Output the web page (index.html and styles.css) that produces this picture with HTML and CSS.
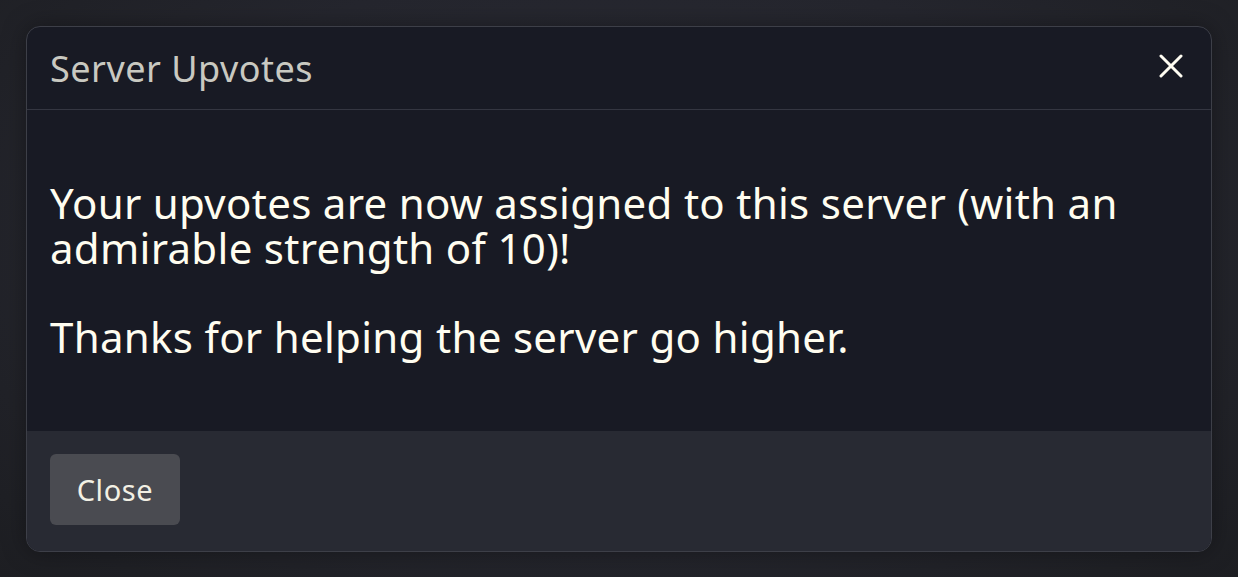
FILE: index.html
```html
<!DOCTYPE html>
<html lang="en">
<head>
	<meta charset="UTF-8">
	<title>Server Upvotes</title>
	<link rel="stylesheet" href="styles.css">
</head>
<body>
	<div class="modal">
		<div class="modal-header">
			<h5 class="modal-title">Server Upvotes</h5>
			<button class="btn-close" type="button" aria-label="Close">
				<svg width="24" height="24" viewBox="0 0 24 24"><path d="M2 2 L22 22 M22 2 L2 22" stroke="#fffdf2" stroke-width="3" stroke-linecap="round"/></svg>
			</button>
		</div>
		<div class="modal-body">
			<p>Your upvotes are now assigned to this server (with an admirable strength of 10)!<br><br>Thanks for helping the server go higher.</p>
		</div>
		<div class="modal-footer">
			<button class="btn" type="button">Close</button>
		</div>
	</div>
</body>
</html>
```

FILE: styles.css
```css
*{margin: 0;padding: 0;box-sizing: border-box;}
body{
	background: radial-gradient(ellipse at 50% 40%, #2b2c35 0%, #25262e 55%, #1d1e22 100%);
	height: 577px;
	padding: 26px;
	font-family: "Noto Sans", "Open Sans", sans-serif;
	overflow: hidden;
}
.modal{
	width: 1186px;
	border: 1px solid #3d3f48;
	border-radius: 14px;
	overflow: hidden;
	background: #181a24;
	box-shadow: 0 0 24px rgba(0,0,0,.35);
}
.modal-header{
	height: 83px;
	display: flex;
	align-items: center;
	justify-content: space-between;
	padding: 0 28px 0 23px;
	border-bottom: 1px solid #343641;
}
.modal-title{
	font-size: 36px;
	font-weight: 400;
	color: #c9c9c1;
	letter-spacing: 0.5px;
}
.btn-close{
	background: none;
	border: 0;
	width: 24px;
	height: 24px;
	margin-top: -4px;
}
.modal-body{
	height: 321px;
	padding: 71px 23px 0;
	color: #fffdf0;
	font-size: 42px;
	line-height: 44.5px;
	letter-spacing: 0.3px;
}
.modal-footer{
	height: 120px;
	background: #282a33;
	padding: 23px 23px;
}
.btn{
	width: 130px;
	height: 71px;
	background: #4a4b51;
	border: 0;
	border-radius: 6px;
	color: #f2f0e4;
	font-family: "Noto Sans", "Open Sans", sans-serif;
	font-size: 29px;
	letter-spacing: 0.6px;
}
```
